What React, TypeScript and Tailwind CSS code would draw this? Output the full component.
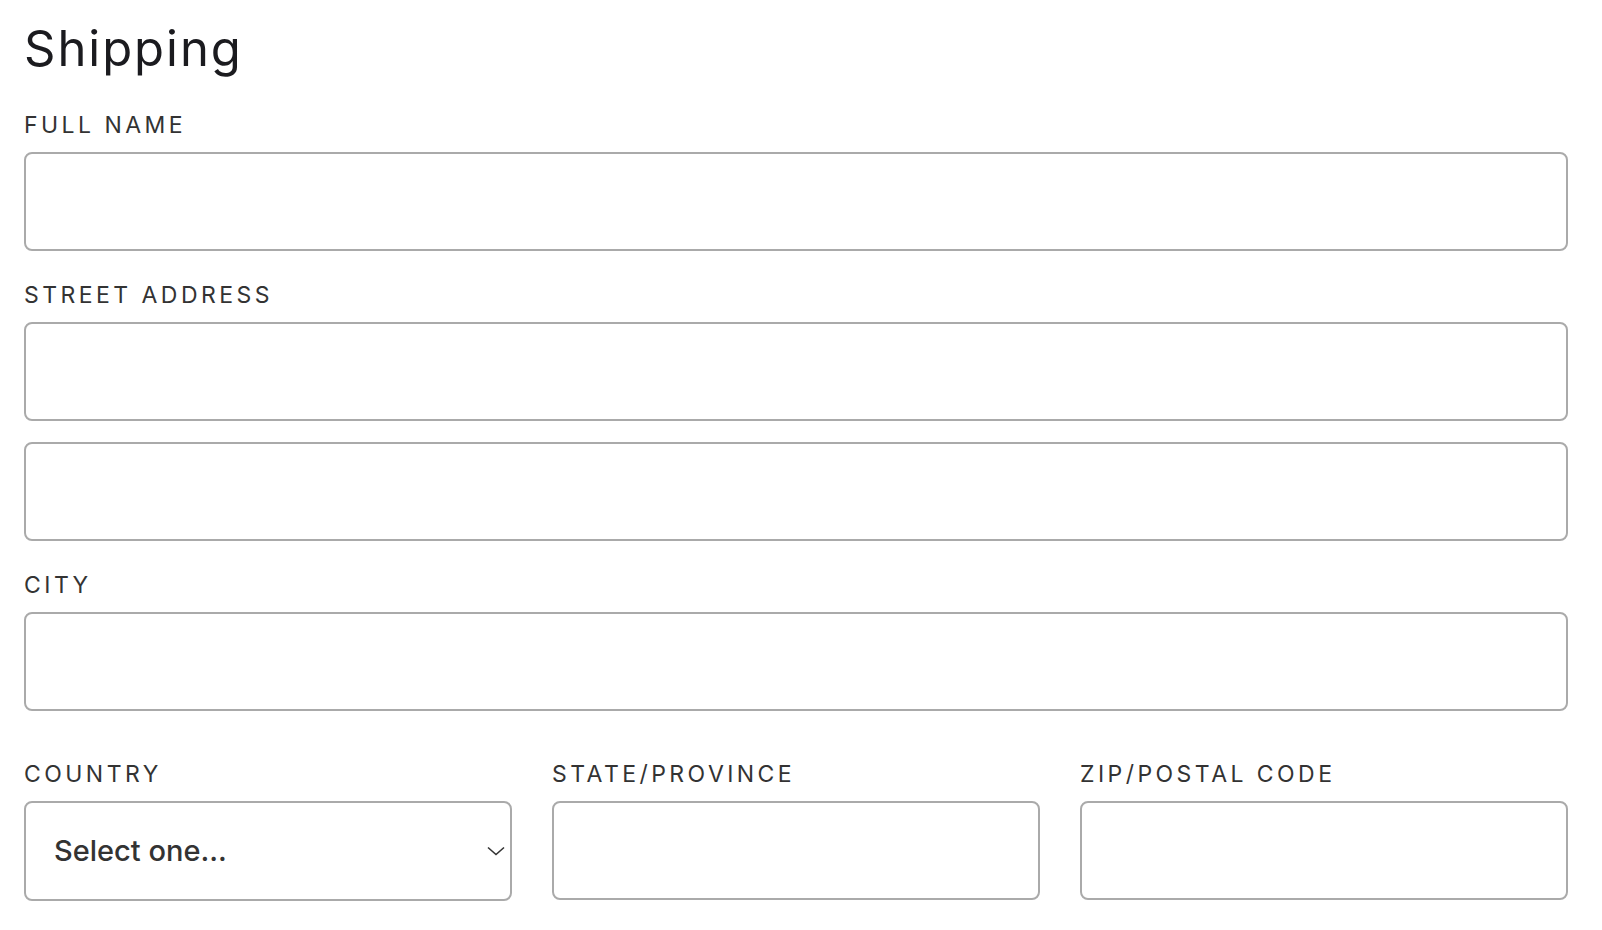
import React from 'react';

const font = { fontFamily: 'Inter, "Noto Sans", sans-serif' };

function Label({ children, className = '' }: { children: React.ReactNode; className?: string }) {
  return (
    <label className={`block text-[23px] leading-[24px] tracking-[0.15em] text-[#333333] mb-[15px] ${className}`}>
      {children}
    </label>
  );
}

function TextInput() {
  return (
    <input
      type="text"
      className="block w-full h-[99px] rounded-[8px] border-2 border-[#aaaaaa] bg-white px-6 text-[29px] text-[#333333] outline-none"
    />
  );
}

export default function App() {
  return (
    <div className="min-h-screen bg-white pl-6 pr-[34px] pt-6" style={font}>
      <h2 className="text-[49px] leading-[49px] font-normal tracking-[0.04em] text-[#1b1b1f]">Shipping</h2>

      <div className="mt-[40px]">
        <Label>FULL NAME</Label>
        <TextInput />
      </div>

      <div className="mt-[32px]">
        <Label>STREET ADDRESS</Label>
        <TextInput />
        <div className="mt-[21px]">
          <TextInput />
        </div>
      </div>

      <div className="mt-[32px]">
        <Label>CITY</Label>
        <TextInput />
      </div>

      <div className="mt-[51px] grid grid-cols-3 gap-10">
        <div>
          <Label>COUNTRY</Label>
          <div className="relative">
            <select
              defaultValue=""
              className="block w-full h-[100px] appearance-none rounded-[8px] border-2 border-[#aaaaaa] bg-white pl-[28px] pr-10 text-[29px] font-medium text-[#333333] outline-none"
            >
              <option value="">Select one...</option>
              <option value="us">United States</option>
              <option value="ca">Canada</option>
            </select>
            <svg
              className="pointer-events-none absolute right-[7px] top-1/2 -translate-y-1/2"
              width="18"
              height="10"
              viewBox="0 0 18 10"
              fill="none"
            >
              <path d="M1 1.5L9 8.5L17 1.5" stroke="#333333" strokeWidth="1.6" />
            </svg>
          </div>
        </div>
        <div>
          <Label>STATE/PROVINCE</Label>
          <TextInput />
        </div>
        <div>
          <Label>ZIP/POSTAL CODE</Label>
          <TextInput />
        </div>
      </div>
    </div>
  );
}
